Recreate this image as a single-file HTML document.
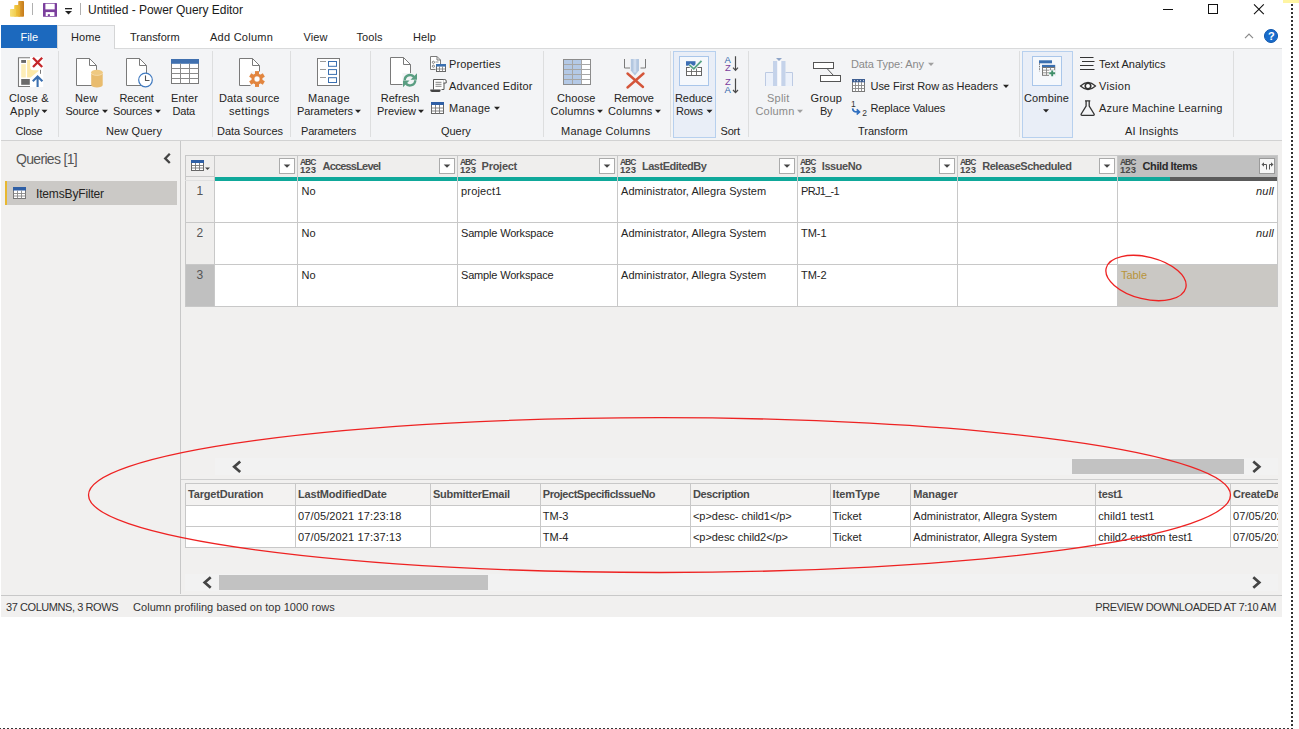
<!DOCTYPE html>
<html lang="en"><head><meta charset="utf-8"><title>Untitled - Power Query Editor</title>
<style>
html,body{margin:0;padding:0;background:#fff;}
body{width:1299px;height:729px;position:relative;overflow:hidden;font-family:"Liberation Sans", sans-serif;}
#app{position:absolute;left:0;top:0;width:1299px;height:729px;overflow:hidden;}
#app>div,#app>svg,#app>span{position:absolute;display:block;}
.t{white-space:nowrap;line-height:16px;height:16px;}
.f0{font-size:12px;font-weight:400;color:#1a1a1a;}
.f1{font-size:11px;font-weight:400;color:#fff;}
.f2{font-size:11px;font-weight:400;color:#252423;}
.f3{font-size:11px;font-weight:700;color:#fff;}
.f4{font-size:11px;font-weight:400;color:#8a8a8a;}
.f5{font-size:9.5px;font-weight:400;color:#2f65ab;}
.f6{font-size:9.5px;font-weight:400;color:#7b3f9d;}
.f7{font-size:8.5px;font-weight:400;color:#333;}
.f8{font-size:14px;font-weight:400;color:#555;}
.f9{font-size:12px;font-weight:400;color:#252423;}
.f10{font-size:8.5px;font-weight:700;color:#484848;}
.f11{font-size:9.5px;font-weight:700;color:#484848;}
.f12{font-size:11px;font-weight:700;color:#505050;}
.f13{font-size:11px;font-weight:700;color:#2a2a2a;}
.f14{font-size:12px;font-weight:400;color:#555;}
.f15{font-size:11px;font-weight:400;color:#252423;font-style:italic;}
.f16{font-size:11px;font-weight:400;color:#b8943a;}
.f17{font-size:11px;font-weight:700;color:#4a4a4a;}
.f18{font-size:11px;font-weight:400;color:#333;}
</style></head><body><div id="app">
<div style="left:0px;top:0px;width:1299px;height:729px;background:#fff;"></div>
<div style="left:1px;top:48px;width:1281px;height:92px;background:#f3f4f6;"></div>
<div style="left:1px;top:140px;width:1281px;height:1px;background:#d2d2d2;"></div>
<div style="left:1px;top:141px;width:1281px;height:476px;background:#f1f0ef;"></div>
<div style="left:1283px;top:0px;width:16px;height:3px;background:#fff5a3;"></div>
<div style="left:1291px;top:4px;width:2px;height:722px;background:repeating-linear-gradient(to bottom,#333 0,#333 2px,transparent 2px,transparent 4px);"></div>
<div style="left:-1px;top:728px;width:1294px;height:1px;background:repeating-linear-gradient(to right,#333 0,#333 2px,transparent 2px,transparent 4px);"></div>
<div style="left:1px;top:25px;width:56px;height:23px;background:#1c69be;"></div>
<div style="left:57px;top:25px;width:58px;height:24px;background:#f3f4f6;border:1px solid #d4d5d6;border-bottom:none;box-sizing:border-box;"></div>
<div style="left:115px;top:48px;width:1167px;height:1px;background:#d9dadb;"></div>
<div style="left:58px;top:51px;width:1px;height:86px;background:#dddedf;"></div>
<div style="left:212px;top:51px;width:1px;height:86px;background:#dddedf;"></div>
<div style="left:290px;top:51px;width:1px;height:86px;background:#dddedf;"></div>
<div style="left:370px;top:51px;width:1px;height:86px;background:#dddedf;"></div>
<div style="left:543px;top:51px;width:1px;height:86px;background:#dddedf;"></div>
<div style="left:670px;top:51px;width:1px;height:86px;background:#dddedf;"></div>
<div style="left:748px;top:51px;width:1px;height:86px;background:#dddedf;"></div>
<div style="left:1019px;top:51px;width:1px;height:86px;background:#dddedf;"></div>
<div style="left:1233px;top:51px;width:1px;height:86px;background:#dddedf;"></div>
<div style="left:673px;top:51px;width:43px;height:87px;background:#e9eef7;border:1px solid #b7d0ee;box-sizing:border-box;"></div>
<div style="left:679px;top:56px;width:30px;height:30px;background:#f5f8fc;border:1px solid #a9c6ea;box-sizing:border-box;"></div>
<div style="left:1022px;top:51px;width:51px;height:87px;background:#e9eef7;border:1px solid #b7d0ee;box-sizing:border-box;"></div>
<div style="left:1032px;top:56px;width:30px;height:30px;background:#f5f8fc;border:1px solid #a9c6ea;box-sizing:border-box;"></div>
<div style="left:5px;top:181px;width:172px;height:24px;background:#cbc9c6;"></div>
<div style="left:5px;top:181px;width:2px;height:24px;background:#e8b830;"></div>
<div style="left:180px;top:141px;width:1px;height:453px;background:#c8c8c8;"></div>
<div style="left:185px;top:155px;width:1093px;height:152px;background:#fff;"></div>
<div style="left:185px;top:155px;width:1093px;height:22px;background:#efeeed;"></div>
<div style="left:185px;top:177px;width:29px;height:130px;background:#efeeed;"></div>
<div style="left:1117px;top:155px;width:161px;height:22px;background:#c0c0c0;"></div>
<div style="left:185px;top:265px;width:29px;height:42px;background:#c0c0c0;"></div>
<div style="left:1117px;top:265px;width:161px;height:42px;background:#cac8c4;"></div>
<div style="left:214px;top:177px;width:1064px;height:4px;background:#0fa89a;"></div>
<div style="left:1170px;top:177px;width:108px;height:4px;background:#5a5a5a;"></div>
<div style="left:185px;top:155px;width:1px;height:152px;background:#c8c8c8;"></div>
<div style="left:214px;top:155px;width:1px;height:152px;background:#c8c8c8;"></div>
<div style="left:297px;top:155px;width:1px;height:152px;background:#c8c8c8;"></div>
<div style="left:457px;top:155px;width:1px;height:152px;background:#c8c8c8;"></div>
<div style="left:617px;top:155px;width:1px;height:152px;background:#c8c8c8;"></div>
<div style="left:797px;top:155px;width:1px;height:152px;background:#c8c8c8;"></div>
<div style="left:957px;top:155px;width:1px;height:152px;background:#c8c8c8;"></div>
<div style="left:1117px;top:155px;width:1px;height:152px;background:#c8c8c8;"></div>
<div style="left:1277px;top:155px;width:1px;height:152px;background:#c8c8c8;"></div>
<div style="left:185px;top:155px;width:1093px;height:1px;background:#c8c8c8;"></div>
<div style="left:185px;top:222px;width:1093px;height:1px;background:#c8c8c8;"></div>
<div style="left:185px;top:264px;width:1093px;height:1px;background:#c8c8c8;"></div>
<div style="left:185px;top:306px;width:1093px;height:1px;background:#c8c8c8;"></div>
<div style="left:185px;top:176px;width:29px;height:1px;background:#c8c8c8;"></div>
<div style="left:185px;top:180px;width:29px;height:1px;background:#e0e0e0;"></div>
<div style="left:215px;top:458px;width:1063px;height:17px;background:#f2f2f2;"></div>
<div style="left:1072px;top:459px;width:172px;height:15px;background:#c2c2c2;"></div>
<div style="left:181px;top:479px;width:1097px;height:1px;background:#cfcfcf;"></div>
<div style="left:185px;top:483px;width:1093px;height:64px;background:#fff;"></div>
<div style="left:185px;top:483px;width:1093px;height:22px;background:#f3f2f1;"></div>
<div style="left:185px;top:483px;width:1px;height:64px;background:#c8c8c8;"></div>
<div style="left:295px;top:483px;width:1px;height:64px;background:#c8c8c8;"></div>
<div style="left:430px;top:483px;width:1px;height:64px;background:#c8c8c8;"></div>
<div style="left:540px;top:483px;width:1px;height:64px;background:#c8c8c8;"></div>
<div style="left:690px;top:483px;width:1px;height:64px;background:#c8c8c8;"></div>
<div style="left:830px;top:483px;width:1px;height:64px;background:#c8c8c8;"></div>
<div style="left:910px;top:483px;width:1px;height:64px;background:#c8c8c8;"></div>
<div style="left:1095px;top:483px;width:1px;height:64px;background:#c8c8c8;"></div>
<div style="left:1230px;top:483px;width:1px;height:64px;background:#c8c8c8;"></div>
<div style="left:185px;top:483px;width:1093px;height:1px;background:#c8c8c8;"></div>
<div style="left:185px;top:505px;width:1093px;height:1px;background:#c8c8c8;"></div>
<div style="left:185px;top:526px;width:1093px;height:1px;background:#c8c8c8;"></div>
<div style="left:185px;top:547px;width:1093px;height:1px;background:#c8c8c8;"></div>
<div style="left:185px;top:574px;width:1093px;height:17px;background:#f2f2f2;"></div>
<div style="left:219px;top:575px;width:269px;height:15px;background:#c2c2c2;"></div>
<div style="left:1px;top:595px;width:1281px;height:1px;background:#c8c8c8;"></div>
<svg style="left:0;top:0" width="1299" height="729" viewBox="0 0 1299 729"><defs><linearGradient id="lg1" x1="0" x2="1"><stop offset="0" stop-color="#e3a535"/><stop offset="1" stop-color="#c47a1a"/></linearGradient><linearGradient id="lg2" x1="0" x2="1"><stop offset="0" stop-color="#f3cc45"/><stop offset="1" stop-color="#e5ad2c"/></linearGradient><linearGradient id="lg3" x1="0" x2="1"><stop offset="0" stop-color="#f8e27a"/><stop offset="1" stop-color="#f1cd4d"/></linearGradient></defs><rect x="18.2" y="1" width="5.800" height="15.800" rx=".8" fill="url(#lg1)"/><rect x="14.200" y="5" width="5.800" height="11.800" rx=".8" fill="url(#lg2)"/><rect x="10" y="9" width="6" height="7.800" rx=".8" fill="url(#lg3)"/><rect x="32" y="3" width="1" height="12" fill="#b0b0b0"/><rect x="80" y="3" width="1" height="12" fill="#b0b0b0"/><rect x="43" y="3" width="14" height="13.800" rx=".6" fill="#7b3f9d"/><rect x="45.400" y="3.700" width="9.300" height="5.700" fill="#fff"/><rect x="45.700" y="12.100" width="8.700" height="3.900" fill="#fff"/><rect x="47.800" y="14.200" width="2.100" height="1.800" fill="#7b3f9d"/><rect x="65" y="8" width="7" height="1.3" fill="#222"/><path d="M65 11h7l-3.5 3.5z" fill="#222"/><rect x="1163" y="9" width="10" height="1" fill="#111"/><rect x="1208.5" y="4.5" width="9" height="9" fill="none" stroke="#111" stroke-width="1"/><path d="M1254 4.300l9.800 9.800M1263.800 4.300l-9.800 9.800" stroke="#111" stroke-width="1.1" fill="none"/><path d="M1245 38.200l4-4.100 4 4.100" stroke="#8a8a8a" stroke-width="1.2" fill="none"/><circle cx="1271" cy="36" r="6.500" fill="#186ccc" stroke="#0f56ab" stroke-width="1"/><path d="M41.5 109.8h6l-3 3.300z" fill="#252423"/><path d="M102 109.8h6l-3 3.300z" fill="#252423"/><path d="M155 109.8h6l-3 3.300z" fill="#252423"/><path d="M355 109.8h6l-3 3.300z" fill="#252423"/><path d="M418 109.8h6l-3 3.300z" fill="#252423"/><path d="M494 106.8h6l-3 3.300z" fill="#252423"/><path d="M597 109.8h6l-3 3.300z" fill="#252423"/><path d="M655 109.8h6l-3 3.300z" fill="#252423"/><path d="M706.5 109.8h6l-3 3.300z" fill="#252423"/><path d="M797 109.8h6l-3 3.300z" fill="#a0a0a0"/><path d="M928 62.8h6l-3 3.300z" fill="#a0a0a0"/><path d="M1003 84.8h6l-3 3.300z" fill="#252423"/><path d="M1043 109.3h6l-3 3.300z" fill="#252423"/><rect x="18" y="57" width="25.200" height="30" fill="#fff"/><path d="M30 57.800H18.500v28.700H30" fill="none" stroke="#7a7a7a" stroke-width="1.100"/><path d="M40.500 69.800v4" stroke="#7a7a7a" stroke-width="1"/><rect x="21.200" y="64.200" width="4.600" height="13.300" fill="#fdeeb8"/><path d="M27.100 60h3.100v7.200q0 3 3 3H38.500v.8L30.600 77.500H27.100z" fill="#fde9a8"/><rect x="21.200" y="60" width="4.800" height="2.900" fill="#6a6a6a"/><rect x="21.200" y="79" width="8.600" height="5.800" fill="#6a6a6a"/><path d="M33 57.800l9.200 9.200M42.200 57.800l-9.200 9.200" stroke="#c4262a" stroke-width="2.300" fill="none"/><path d="M37.600 87V76.500M32.800 81.300l4.800-4.900 4.800 4.900" stroke="#3a6fb0" stroke-width="2.100" fill="none"/><path d="M76.5 58.5h13l7 7v20h-20z" fill="#fff" stroke="#7a7a7a" stroke-width="1"/><path d="M89.5 58.5v7h7" fill="none" stroke="#7a7a7a" stroke-width="1"/><path d="M91.200 72.300v12.600a5.750 2.600 0 0 0 11.500 0V72.300z" fill="#e9bc6e"/><ellipse cx="96.950" cy="72.300" rx="5.750" ry="2.500" fill="#efc981"/><path d="M91.200 72.800a5.750 2.500 0 0 0 11.500 0" fill="none" stroke="#f7e3bd" stroke-width=".8"/><path d="M126.5 58.5h13l7 7v20h-20z" fill="#fff" stroke="#7a7a7a" stroke-width="1"/><path d="M139.5 58.5v7h7" fill="none" stroke="#7a7a7a" stroke-width="1"/><circle cx="145.5" cy="80" r="6.8" fill="#fff" stroke="#3f79bf" stroke-width="1.2"/><path d="M145.5 75.5v5h4" fill="none" stroke="#555" stroke-width="1.1"/><rect x="171.5" y="59.5" width="27" height="24" fill="#fff" stroke="#7a7a7a"/><rect x="171" y="59" width="28" height="4.800" fill="#4070af"/><path d="M171.5 68.5h27M171.5 73.5h27M171.5 78.5h27M180.5 63.5v20M189.5 63.5v20" stroke="#8a8a8a" stroke-width="1" fill="none"/><path d="M239.5 58.5h13l7 7v20h-20z" fill="#fff" stroke="#7a7a7a" stroke-width="1"/><path d="M252.5 58.5v7h7" fill="none" stroke="#7a7a7a" stroke-width="1"/><rect x="250.500" y="71.500" width="14" height="16" fill="#f3f4f6"/><g fill="#e2853f"><rect x="255" y="71.1" width="4" height="4.500" transform="rotate(0 257 79)"/><rect x="255" y="71.1" width="4" height="4.500" transform="rotate(60 257 79)"/><rect x="255" y="71.1" width="4" height="4.500" transform="rotate(120 257 79)"/><rect x="255" y="71.1" width="4" height="4.500" transform="rotate(180 257 79)"/><rect x="255" y="71.1" width="4" height="4.500" transform="rotate(240 257 79)"/><rect x="255" y="71.1" width="4" height="4.500" transform="rotate(300 257 79)"/></g><circle cx="257" cy="79" r="4.1" fill="none" stroke="#e2853f" stroke-width="2.800"/><circle cx="257" cy="79" r="2" fill="#fff"/><rect x="317.500" y="58.500" width="22" height="27" fill="#fff" stroke="#7a7a7a"/><path d="M320 61.500h6M320 69.500h6M320 77.500h6" stroke="#9a9a9a" fill="none"/><rect x="328.500" y="61.500" width="8" height="4.800" fill="#fff" stroke="#3a6fb0"/><rect x="328.500" y="69.600" width="8" height="4.800" fill="#fff" stroke="#3a6fb0"/><rect x="328.500" y="77.700" width="8" height="4.800" fill="#fff" stroke="#3a6fb0"/><path d="M390.5 57.5h13l7 7v20h-20z" fill="#fff" stroke="#7a7a7a" stroke-width="1"/><path d="M403.5 57.5v7h7" fill="none" stroke="#7a7a7a" stroke-width="1"/><rect x="402.500" y="73" width="15" height="15.500" fill="#f3f4f6"/><path d="M404.700 80.200a5.300 5.300 0 0 1 9.600 -3" fill="none" stroke="#5a9e82" stroke-width="2.400"/><path d="M417 73.200v6.600h-6.500z" fill="#5a9e82"/><path d="M415.300 80.200a5.300 5.300 0 0 1 -9.600 3" fill="none" stroke="#5a9e82" stroke-width="2.400"/><path d="M403 87.200v-6.600h6.500z" fill="#5a9e82"/><path d="M430.500 69.500v-13h6.500l3.500 3.500v4" fill="#fff" stroke="#7a7a7a"/><path d="M437 56.500v3.500h3.500" fill="none" stroke="#7a7a7a"/><path d="M430.500 69.500h5" stroke="#7a7a7a"/><circle cx="433.400" cy="62.300" r="1.100" fill="none" stroke="#666" stroke-width=".8"/><circle cx="433.400" cy="66.200" r="1.100" fill="none" stroke="#666" stroke-width=".8"/><path d="M435.500 62h3" stroke="#888" stroke-width=".9"/><rect x="436.500" y="64.500" width="9" height="7" fill="#fff" stroke="#666"/><rect x="436" y="64" width="10" height="2.600" fill="#3a6fb0"/><path d="M439.500 66.500v5M442.500 66.500v5M436.500 69h9" stroke="#777" stroke-width=".8"/><path d="M433.500 89.500v-10h10.500v10" fill="#fff" stroke="#555"/><path d="M443.500 79.500h1.200q1.500 0 1.500 1.500v2h-2.700" fill="#fff" stroke="#555"/><path d="M430.300 90.300q0 1.700 1.700 1.700h7q1.500 0 1.500-1.600V89.500H430.300z" fill="#444"/><path d="M441.500 89.500h2.500" stroke="#555"/><path d="M435.500 82.300h6M435.500 84.300h6M435.500 86.300h6" stroke="#777" stroke-width=".9"/><rect x="431.500" y="102.500" width="12" height="11" fill="#fff" stroke="#666"/><rect x="431" y="102" width="13" height="3" fill="#2f5fa5"/><path d="M431.500 108h12M431.500 111h12M435.500 105v8.500M439.500 105v8.500" stroke="#777" stroke-width=".9"/><rect x="563.500" y="59.500" width="27" height="25" fill="#fff"/><rect x="563.500" y="59.500" width="18" height="25" fill="#b4c9e6"/><path d="M563.500 64.500h27M563.500 69.500h27M563.500 74.500h27M563.500 79.500h27M572.500 59.500v25M581.500 59.500v25" stroke="#a6a6a6" fill="none"/><rect x="563.500" y="59.500" width="27" height="25" fill="none" stroke="#8c8c8c"/><path d="M624.500 59v9h5.500M645.500 59v9h-5" fill="none" stroke="#7a7a7a"/><path d="M630.800 59h8.200v11.500l-4.100 5-4.100-5z" fill="#b3c7e0"/><path d="M633.500 59h2.800v13.500h-2.800z" fill="#cfdcee"/><path d="M627.500 73.500l15.500 13.500M643.500 73.500l-16 14" stroke="#d4553a" stroke-width="2.400" fill="none" stroke-linecap="round"/><rect x="686.500" y="67.500" width="15" height="8" fill="#fff" stroke="#666"/><path d="M686.500 71.500h15M691.500 67.500v8M696.500 67.500v8" stroke="#666" stroke-width=".9"/><rect x="686" y="61.200" width="9.500" height="4.500" fill="#3c6eb4"/><path d="M689.300 64.800l4.500 4 7.700-8" fill="none" stroke="#f5f8fc" stroke-width="3.500"/><path d="M689.300 64.800l4.500 4 7.700-8" fill="none" stroke="#58a383" stroke-width="1.800"/><path d="M735.500 56.200v14M733 67.700l2.500 2.700 2.500-2.700" fill="none" stroke="#4a4a4a" stroke-width="1.200"/><path d="M735.500 78.500v14M733 90l2.500 2.700 2.500-2.700" fill="none" stroke="#4a4a4a" stroke-width="1.200"/><defs><linearGradient id="sg" x1="0" y1="0" x2="0" y2="1"><stop offset="0" stop-color="#b4c4e0"/><stop offset="1" stop-color="#dfe7f4"/></linearGradient></defs><rect x="765.500" y="72.500" width="7.500" height="13.500" fill="#ecf1fa"/><rect x="785.500" y="72.500" width="7" height="13.500" fill="#ecf1fa"/><path d="M765.500 86v-13.500h7.500M792.500 86v-13.500h-7" fill="none" stroke="#bccae3"/><rect x="773" y="61" width="4.400" height="25" fill="#c5d3ea"/><rect x="781.200" y="61" width="4.300" height="25" fill="#c5d3ea"/><rect x="777.400" y="61" width="3.800" height="25" fill="#fafbfd"/><path d="M776 58h6l-3 2.900z" fill="#8fa5c8"/><rect x="813.500" y="62.500" width="20" height="6" fill="#fff" stroke="#555"/><rect x="820.500" y="75.500" width="20" height="6" fill="#fff" stroke="#555"/><path d="M827 68.500l6.500 7" stroke="#555" fill="none"/><rect x="852.500" y="79.500" width="12" height="12" fill="#fff" stroke="#777"/><rect x="852" y="79" width="13" height="3.300" fill="#3f5f92"/><path d="M852.500 85.500h12M852.500 88.500h12M855.500 82v9.500M858.500 82v9.500M861.500 82v9.500" stroke="#888" stroke-width=".9"/><path d="M854 80.700h1M857 80.700h1M860 80.700h1M863 80.700h1" stroke="#dfe6f2" stroke-width="1"/><path d="M852.600 108.300q.4 3.600 4 3.600h2.500M856.700 109.300l2.800 2.600-2.800 2.600" fill="none" stroke="#2f6fc0" stroke-width="1.700"/><rect x="1039" y="60.300" width="13" height="3" fill="#3a6fb0"/><path d="M1039.500 63.300v8" stroke="#777" stroke-dasharray="1.500 1"/><rect x="1042" y="64.900" width="13.200" height="2.600" fill="#3a6fb0"/><rect x="1042.500" y="67.500" width="12.200" height="7.800" fill="#fff" stroke="#777"/><path d="M1042.500 70.200h12M1042.500 72.800h8M1046.500 67.500v7.800M1050.500 67.500v4" stroke="#888" stroke-width=".9"/><rect x="1049" y="70.200" width="6.500" height="6.200" fill="#f5f8fc"/><path d="M1052.200 70.400v5.800M1049.300 73.300h5.800" stroke="#3f8f6a" stroke-width="1.900"/><path d="M1080 57.500h13.500M1082 61.500h12.500M1080 65.500h13.500M1080 69.500h14.500" stroke="#333" stroke-width="1.100"/><path d="M1080.500 86q7.500-7 15 0q-7.500 7-15 0z" fill="#fff" stroke="#333" stroke-width="1.200"/><circle cx="1088" cy="86" r="2.800" fill="none" stroke="#333" stroke-width="1.600"/><path d="M1085 100.800h5.300M1086.100 100.800v5.200l-4.900 8q-.6 1.300 .9 1.300h11.100q1.500 0 .9-1.300l-4.900-8v-5.200" fill="none" stroke="#333" stroke-width="1.300"/><path d="M169.800 153.800l-4.600 4.600 4.600 4.600" fill="none" stroke="#444" stroke-width="2.300"/><rect x="13.500" y="187.500" width="12" height="11" fill="#fff" stroke="#777"/><rect x="13" y="187" width="13" height="3.500" fill="#2f5fa5"/><path d="M13.500 193.500h12M13.500 196h12M17.500 190.500v8M21.500 190.500v8" stroke="#888" stroke-width=".9"/><rect x="191.500" y="160.500" width="12" height="10" fill="#fff" stroke="#666"/><rect x="191" y="160" width="13" height="3" fill="#2f5fa5"/><path d="M191.500 165.500h12M191.500 168h12M195.500 163v7.500M199.500 163v7.500" stroke="#777" stroke-width=".9"/><path d="M205 167.500h5l-2.500 2.600z" fill="#444"/><rect x="279.5" y="158.500" width="15" height="15" fill="#fff" stroke="#ababab"/><path d="M283.7 164.500h6.600l-3.300 3.300z" fill="#444"/><rect x="439.5" y="158.500" width="15" height="15" fill="#fff" stroke="#ababab"/><path d="M443.7 164.500h6.600l-3.300 3.300z" fill="#444"/><rect x="599.5" y="158.500" width="15" height="15" fill="#fff" stroke="#ababab"/><path d="M603.7 164.500h6.600l-3.300 3.300z" fill="#444"/><rect x="779.5" y="158.500" width="15" height="15" fill="#fff" stroke="#ababab"/><path d="M783.7 164.500h6.600l-3.300 3.300z" fill="#444"/><rect x="939.5" y="158.500" width="15" height="15" fill="#fff" stroke="#ababab"/><path d="M943.7 164.500h6.600l-3.300 3.300z" fill="#444"/><rect x="1099.5" y="158.500" width="15" height="15" fill="#fff" stroke="#ababab"/><path d="M1103.7 164.500h6.600l-3.300 3.300z" fill="#444"/><rect x="1259.500" y="158.500" width="15" height="15" fill="#f6f6f6" stroke="#9a9a9a"/><path d="M1266.500 169.500v-5h-3M1269.500 169.500v-5h2.500" stroke="#555" stroke-width="1" fill="none"/><path d="M1261.500 164.500l2.500-2.300v4.600zM1273.500 164.500l-2.500-2.300v4.600z" fill="#555"/><path d="M240.200 461.500l-6 5.200 6 5.200" fill="none" stroke="#444" stroke-width="2.700"/><path d="M1253.300 461.500l6 5.200-6 5.200" fill="none" stroke="#444" stroke-width="2.700"/><path d="M210.700 577.300l-6 5.200 6 5.200" fill="none" stroke="#444" stroke-width="2.700"/><path d="M1253.300 577.300l6 5.200-6 5.200" fill="none" stroke="#444" stroke-width="2.700"/></svg>
<span class="t f0" style="left:88px;top:2.0px;letter-spacing:-0.04px;">Untitled - Power Query Editor</span>
<span class="t f1" style="left:20.5px;top:28.5px;letter-spacing:-0.06px;">File</span>
<span class="t f2" style="left:71px;top:28.5px;letter-spacing:0.09px;">Home</span>
<span class="t f2" style="left:130px;top:28.5px;letter-spacing:-0.02px;">Transform</span>
<span class="t f2" style="left:210px;top:28.5px;letter-spacing:0.25px;">Add Column</span>
<span class="t f2" style="left:303.5px;top:28.5px;letter-spacing:0.09px;">View</span>
<span class="t f2" style="left:356.5px;top:28.5px;letter-spacing:0.06px;">Tools</span>
<span class="t f2" style="left:413px;top:28.5px;letter-spacing:0.09px;">Help</span>
<span class="t f3" style="left:1268px;top:28.0px;">?</span>
<span class="t f2" style="left:9px;top:90.3px;letter-spacing:0.17px;">Close &amp;</span>
<span class="t f2" style="left:10px;top:103.3px;letter-spacing:0.49px;">Apply</span>
<span class="t f2" style="left:15.5px;top:123.3px;letter-spacing:-0.23px;">Close</span>
<span class="t f2" style="left:75px;top:90.3px;letter-spacing:0.16px;">New</span>
<span class="t f2" style="left:65.5px;top:103.3px;letter-spacing:-0.23px;">Source</span>
<span class="t f2" style="left:119.5px;top:90.3px;letter-spacing:-0.11px;">Recent</span>
<span class="t f2" style="left:113px;top:103.3px;letter-spacing:-0.19px;">Sources</span>
<span class="t f2" style="left:171px;top:90.3px;letter-spacing:0.14px;">Enter</span>
<span class="t f2" style="left:172.5px;top:103.3px;letter-spacing:-0.19px;">Data</span>
<span class="t f2" style="left:106px;top:123.3px;letter-spacing:0.11px;">New Query</span>
<span class="t f2" style="left:219px;top:90.3px;letter-spacing:0.11px;">Data source</span>
<span class="t f2" style="left:229px;top:103.3px;letter-spacing:0.32px;">settings</span>
<span class="t f2" style="left:217px;top:123.3px;letter-spacing:-0.05px;">Data Sources</span>
<span class="t f2" style="left:308px;top:90.3px;letter-spacing:0.37px;">Manage</span>
<span class="t f2" style="left:297px;top:103.3px;letter-spacing:-0.09px;">Parameters</span>
<span class="t f2" style="left:301px;top:123.3px;letter-spacing:-0.19px;">Parameters</span>
<span class="t f2" style="left:380.7px;top:90.3px;letter-spacing:0.04px;">Refresh</span>
<span class="t f2" style="left:377px;top:103.3px;letter-spacing:-0.02px;">Preview</span>
<span class="t f2" style="left:449px;top:56.3px;letter-spacing:0.14px;">Properties</span>
<span class="t f2" style="left:449px;top:78.3px;letter-spacing:0.19px;">Advanced Editor</span>
<span class="t f2" style="left:449px;top:100.3px;letter-spacing:0.29px;">Manage</span>
<span class="t f2" style="left:441px;top:123.3px;letter-spacing:-0.05px;">Query</span>
<span class="t f2" style="left:557px;top:90.3px;letter-spacing:0.1px;">Choose</span>
<span class="t f2" style="left:550.5px;top:103.3px;letter-spacing:0.08px;">Columns</span>
<span class="t f2" style="left:614px;top:90.3px;letter-spacing:-0.21px;">Remove</span>
<span class="t f2" style="left:608px;top:103.3px;letter-spacing:0.16px;">Columns</span>
<span class="t f2" style="left:561px;top:123.3px;letter-spacing:0.23px;">Manage Columns</span>
<span class="t f2" style="left:675px;top:90.3px;letter-spacing:-0.07px;">Reduce</span>
<span class="t f2" style="left:676px;top:103.3px;letter-spacing:-0.13px;">Rows</span>
<span class="t f2" style="left:720.5px;top:123.3px;letter-spacing:-0.17px;">Sort</span>
<span class="t f4" style="left:767px;top:90.3px;letter-spacing:0.22px;">Split</span>
<span class="t f4" style="left:755.5px;top:103.3px;letter-spacing:0.18px;">Column</span>
<span class="t f2" style="left:810.5px;top:90.3px;letter-spacing:0.18px;">Group</span>
<span class="t f2" style="left:820px;top:103.3px;letter-spacing:-0.42px;">By</span>
<span class="t f4" style="left:851px;top:56.3px;letter-spacing:-0.1px;">Data Type: Any</span>
<span class="t f2" style="left:870.5px;top:78.3px;letter-spacing:-0.04px;">Use First Row as Headers</span>
<span class="t f2" style="left:870.5px;top:100.3px;letter-spacing:-0.12px;">Replace Values</span>
<span class="t f2" style="left:858px;top:123.3px;letter-spacing:-0.02px;">Transform</span>
<span class="t f2" style="left:1024px;top:90.3px;letter-spacing:0.14px;">Combine</span>
<span class="t f2" style="left:1099px;top:56.3px;letter-spacing:-0.02px;">Text Analytics</span>
<span class="t f2" style="left:1099px;top:78.3px;letter-spacing:0.32px;">Vision</span>
<span class="t f2" style="left:1099px;top:100.3px;letter-spacing:0.2px;">Azure Machine Learning</span>
<span class="t f2" style="left:1125px;top:123.3px;letter-spacing:0.19px;">AI Insights</span>
<span class="t f5" style="left:724.5px;top:51.9px;">A</span>
<span class="t f6" style="left:725px;top:60.1px;">Z</span>
<span class="t f6" style="left:725px;top:73.8px;">Z</span>
<span class="t f5" style="left:724.5px;top:82.1px;">A</span>
<span class="t f7" style="left:851px;top:96.3px;letter-spacing:-0.73px;">1</span>
<span class="t f7" style="left:862.3px;top:105.1px;letter-spacing:-0.73px;">2</span>
<span class="t f8" style="left:16px;top:151.0px;letter-spacing:-0.68px;">Queries [1]</span>
<span class="t f9" style="left:36px;top:185.5px;letter-spacing:-0.16px;">ItemsByFilter</span>
<span class="t f10" style="left:300px;top:153.6px;letter-spacing:-1.04px;">ABC</span>
<span class="t f11" style="left:300px;top:161.8px;letter-spacing:0.05px;">123</span>
<span class="t f12" style="left:322.5px;top:158.0px;letter-spacing:-0.81px;">AccessLevel</span>
<span class="t f10" style="left:460px;top:153.6px;letter-spacing:-1.04px;">ABC</span>
<span class="t f11" style="left:460px;top:161.8px;letter-spacing:0.05px;">123</span>
<span class="t f12" style="left:481.6px;top:158.0px;letter-spacing:-0.27px;">Project</span>
<span class="t f10" style="left:620px;top:153.6px;letter-spacing:-1.04px;">ABC</span>
<span class="t f11" style="left:620px;top:161.8px;letter-spacing:0.05px;">123</span>
<span class="t f12" style="left:642px;top:158.0px;letter-spacing:-0.49px;">LastEditedBy</span>
<span class="t f10" style="left:800px;top:153.6px;letter-spacing:-1.04px;">ABC</span>
<span class="t f11" style="left:800px;top:161.8px;letter-spacing:0.05px;">123</span>
<span class="t f12" style="left:821.8px;top:158.0px;letter-spacing:-0.44px;">IssueNo</span>
<span class="t f10" style="left:960px;top:153.6px;letter-spacing:-1.04px;">ABC</span>
<span class="t f11" style="left:960px;top:161.8px;letter-spacing:0.05px;">123</span>
<span class="t f12" style="left:982.3px;top:158.0px;letter-spacing:-0.51px;">ReleaseScheduled</span>
<span class="t f10" style="left:1120px;top:153.6px;letter-spacing:-1.04px;">ABC</span>
<span class="t f11" style="left:1120px;top:161.8px;letter-spacing:0.05px;">123</span>
<span class="t f13" style="left:1142.6px;top:158.0px;letter-spacing:-0.42px;">Child Items</span>
<span class="t f14" style="left:196.5px;top:183.0px;">1</span>
<span class="t f2" style="left:301.4px;top:183.0px;letter-spacing:0.27px;">No</span>
<span class="t f14" style="left:196.5px;top:225.0px;">2</span>
<span class="t f2" style="left:301.4px;top:225.0px;letter-spacing:0.27px;">No</span>
<span class="t f14" style="left:196.5px;top:267.0px;">3</span>
<span class="t f2" style="left:301.4px;top:267.0px;letter-spacing:0.27px;">No</span>
<span class="t f2" style="left:461px;top:183.0px;letter-spacing:0.18px;">project1</span>
<span class="t f2" style="left:461px;top:225.0px;letter-spacing:-0.17px;">Sample Workspace</span>
<span class="t f2" style="left:461px;top:267.0px;letter-spacing:-0.17px;">Sample Workspace</span>
<span class="t f2" style="left:621px;top:183.0px;letter-spacing:0.05px;">Administrator, Allegra System</span>
<span class="t f2" style="left:621px;top:225.0px;letter-spacing:0.05px;">Administrator, Allegra System</span>
<span class="t f2" style="left:621px;top:267.0px;letter-spacing:0.05px;">Administrator, Allegra System</span>
<span class="t f2" style="left:801px;top:183.0px;letter-spacing:-0.69px;">PRJ1_-1</span>
<span class="t f2" style="left:801px;top:225.0px;letter-spacing:-0.04px;">TM-1</span>
<span class="t f2" style="left:801px;top:267.0px;letter-spacing:-0.04px;">TM-2</span>
<span class="t f15" style="left:1256px;top:183.0px;letter-spacing:0.22px;">null</span>
<span class="t f15" style="left:1256px;top:225.0px;letter-spacing:0.22px;">null</span>
<span class="t f16" style="left:1121px;top:267.0px;letter-spacing:-0.06px;">Table</span>
<span class="t f17" style="left:188px;top:485.7px;letter-spacing:-0.19px;">TargetDuration</span>
<span class="t f17" style="left:298px;top:485.7px;letter-spacing:-0.19px;">LastModifiedDate</span>
<span class="t f17" style="left:433px;top:485.7px;letter-spacing:-0.28px;">SubmitterEmail</span>
<span class="t f17" style="left:542.8px;top:485.7px;letter-spacing:-0.46px;">ProjectSpecificIssueNo</span>
<span class="t f17" style="left:693px;top:485.7px;letter-spacing:-0.37px;">Description</span>
<span class="t f17" style="left:832.6px;top:485.7px;letter-spacing:-0.02px;">ItemType</span>
<span class="t f17" style="left:913.3px;top:485.7px;letter-spacing:-0.14px;">Manager</span>
<span class="t f17" style="left:1098.3px;top:485.7px;letter-spacing:-0.32px;">test1</span>
<span class="t f17" style="left:1233px;top:485.7px;letter-spacing:-0.21px;width:45px;overflow:hidden;">CreateDate</span>
<span class="t f2" style="left:298px;top:507.7px;letter-spacing:0.13px;">07/05/2021 17:23:18</span>
<span class="t f2" style="left:693px;top:507.7px;letter-spacing:-0.05px;">&lt;p&gt;desc- child1&lt;/p&gt;</span>
<span class="t f2" style="left:832.6px;top:507.7px;letter-spacing:0.03px;">Ticket</span>
<span class="t f2" style="left:913.3px;top:507.7px;letter-spacing:0.01px;">Administrator, Allegra System</span>
<span class="t f2" style="left:1098.3px;top:507.7px;letter-spacing:0.03px;">child1 test1</span>
<span class="t f2" style="left:1233px;top:507.7px;letter-spacing:0.11px;width:45px;overflow:hidden;">07/05/2021 17:23:18</span>
<span class="t f2" style="left:298px;top:528.9px;letter-spacing:0.13px;">07/05/2021 17:37:13</span>
<span class="t f2" style="left:693px;top:528.9px;letter-spacing:-0.06px;">&lt;p&gt;desc child2&lt;/p&gt;</span>
<span class="t f2" style="left:832.6px;top:528.9px;letter-spacing:0.03px;">Ticket</span>
<span class="t f2" style="left:913.3px;top:528.9px;letter-spacing:0.01px;">Administrator, Allegra System</span>
<span class="t f2" style="left:1098.3px;top:528.9px;letter-spacing:0.01px;">child2 custom test1</span>
<span class="t f2" style="left:1233px;top:528.9px;letter-spacing:0.11px;width:45px;overflow:hidden;">07/05/2021 17:23:18</span>
<span class="t f2" style="left:542.8px;top:507.7px;letter-spacing:-0.02px;">TM-3</span>
<span class="t f2" style="left:542.8px;top:528.9px;letter-spacing:-0.02px;">TM-4</span>
<span class="t f18" style="left:6px;top:599.0px;letter-spacing:-0.43px;">37 COLUMNS, 3 ROWS</span>
<span class="t f18" style="left:133px;top:599.0px;letter-spacing:0.05px;">Column profiling based on top 1000 rows</span>
<span class="t f18" style="left:1095.3px;top:599.0px;letter-spacing:-0.42px;">PREVIEW DOWNLOADED AT 7:10 AM</span>
<svg style="left:0;top:0" width="1299" height="729" viewBox="0 0 1299 729"><ellipse cx="1146" cy="278" rx="41" ry="21" transform="rotate(14 1146 278)" fill="none" stroke="#ee2222" stroke-width="1.300"/><ellipse cx="659.500" cy="495.100" rx="571" ry="77.400" fill="none" stroke="#ee2222" stroke-width="1.300"/></svg>
</div></body></html>
